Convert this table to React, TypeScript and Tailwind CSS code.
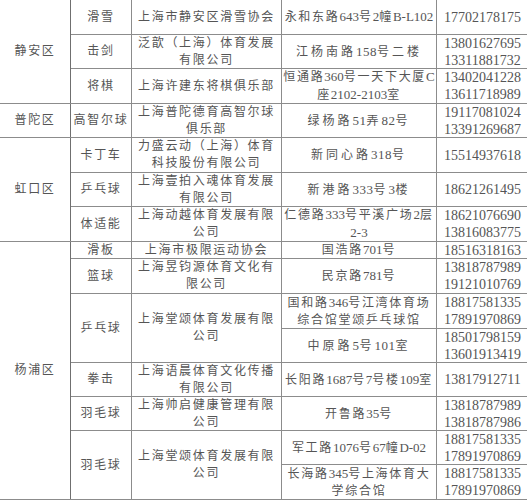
import type { ReactNode } from 'react';

type Row = {
  district?: { name: string; span: number };
  sport?: { name: string; span: number };
  company?: { lines: string[]; span: number };
  address: string[];
  wide?: boolean;
  phones: string[];
  h: string;
};

const rows: Row[] = [
  {
    district: { name: '静安区', span: 3 },
    sport: { name: '滑雪', span: 1 },
    company: { lines: ['上海市静安区滑雪协会'], span: 1 },
    address: ['永和东路643号2幢B-L102'],
    phones: ['17702178175'],
    h: 'h-[35px]',
  },
  {
    sport: { name: '击剑', span: 1 },
    company: { lines: ['泛歆（上海）体育发展', '有限公司'], span: 1 },
    address: ['江杨南路158号二楼'],
    wide: true,
    phones: ['13801627695', '13311881732'],
    h: 'h-[34px]',
  },
  {
    sport: { name: '将棋', span: 1 },
    company: { lines: ['上海许建东将棋俱乐部'], span: 1 },
    address: ['恒通路360号一天下大厦C', '座2102-2103室'],
    phones: ['13402041228', '13611718989'],
    h: 'h-[35px]',
  },
  {
    district: { name: '普陀区', span: 1 },
    sport: { name: '高智尔球', span: 1 },
    company: { lines: ['上海普陀德育高智尔球', '俱乐部'], span: 1 },
    address: ['绿杨路51弄82号'],
    wide: true,
    phones: ['19117081024', '13391269687'],
    h: 'h-[34px]',
  },
  {
    district: { name: '虹口区', span: 3 },
    sport: { name: '卡丁车', span: 1 },
    company: { lines: ['力盛云动（上海）体育', '科技股份有限公司'], span: 1 },
    address: ['新同心路318号'],
    wide: true,
    phones: ['15514937618'],
    h: 'h-[35px]',
  },
  {
    sport: { name: '乒乓球', span: 1 },
    company: { lines: ['上海壹拍入魂体育发展', '有限公司'], span: 1 },
    address: ['新港路333号3楼'],
    wide: true,
    phones: ['18621261495'],
    h: 'h-[34px]',
  },
  {
    sport: { name: '体适能', span: 1 },
    company: { lines: ['上海动越体育发展有限', '公司'], span: 1 },
    address: ['仁德路333号平溪广场2层', '2-3'],
    phones: ['18621076690', '13816083775'],
    h: 'h-[34px]',
  },
  {
    district: { name: '杨浦区', span: 9 },
    sport: { name: '滑板', span: 1 },
    company: { lines: ['上海市极限运动协会'], span: 1 },
    address: ['国浩路701号'],
    phones: ['18516318163'],
    h: 'h-[17px]',
  },
  {
    sport: { name: '篮球', span: 1 },
    company: { lines: ['上海昱钧源体育文化有', '限公司'], span: 1 },
    address: ['民京路781号'],
    phones: ['13818787989', '19121010769'],
    h: 'h-[35px]',
  },
  {
    sport: { name: '乒乓球', span: 2 },
    company: { lines: ['上海堂颂体育发展有限', '公司'], span: 2 },
    address: ['国和路346号江湾体育场', '综合馆堂颂乒乓球馆'],
    phones: ['18817581335', '17891970869'],
    h: 'h-[35px]',
  },
  {
    address: ['中原路5号101室'],
    wide: true,
    phones: ['18501798159', '13601913419'],
    h: 'h-[34px]',
  },
  {
    sport: { name: '拳击', span: 1 },
    company: { lines: ['上海语晨体育文化传播', '有限公司'], span: 1 },
    address: ['长阳路1687号7号楼109室'],
    phones: ['13817912711'],
    h: 'h-[34px]',
  },
  {
    sport: { name: '羽毛球', span: 1 },
    company: { lines: ['上海帅启健康管理有限', '公司'], span: 1 },
    address: ['开鲁路35号'],
    phones: ['13818787989', '13818787986'],
    h: 'h-[34px]',
  },
  {
    sport: { name: '羽毛球', span: 2 },
    company: { lines: ['上海堂颂体育发展有限', '公司'], span: 2 },
    address: ['军工路1076号67幢D-02'],
    phones: ['18817581335', '17891970869'],
    h: 'h-[34px]',
  },
  {
    address: ['长海路345号上海体育大', '学综合馆'],
    phones: ['18817581335', '17891970869'],
    h: 'h-[35px]',
  },
];

const CJK = /[\u3000-\u30ff\u4e00-\u9fff\uff00-\uffef]/;

// CJK runs get the wide letter spacing of the source doc, digits stay tight
function mixed(text: string, wide = false): ReactNode[] {
  return text
    .split(/([\u3000-\u30ff\u4e00-\u9fff\uff00-\uffef]+)/)
    .filter(Boolean)
    .map((part, i) =>
      CJK.test(part) ? (
        <span key={i} className={wide ? 'tracking-[3px]' : 'tracking-[1.7px]'}>
          {part}
        </span>
      ) : (
        <span key={i} className={wide ? 'text-[13px] tracking-[0.5px]' : 'text-[13px]'}>
          {part}
        </span>
      )
    );
}

const cell =
  'border border-[#8c8c8c] p-0 text-center align-middle leading-[17px] whitespace-nowrap';

// lines are 17px apart like the source, the pair bleeds 1px into the borders
function Lines({ lines, wide, className = '' }: { lines: string[]; wide?: boolean; className?: string }) {
  return (
    <div className={`-my-px ${className}`}>
      {lines.map((l, j) => (
        <div key={j}>{className ? l : mixed(l, wide)}</div>
      ))}
    </div>
  );
}

export default function App() {
  return (
    <div className="w-[527px] h-[500px] overflow-hidden bg-white">
      <table className="-ml-px -mt-px table-fixed border-collapse w-[529px] font-['Liberation_Serif','Noto_Sans_CJK_SC',serif] text-[12px] text-[#555555]">
        <colgroup>
          <col className="w-[71px]" />
          <col className="w-[61px]" />
          <col className="w-[150px]" />
          <col className="w-[155px]" />
          <col className="w-[92px]" />
        </colgroup>
        <tbody>
          {rows.map((r, i) => (
            <tr key={i} className={r.h}>
              {r.district && (
                <td rowSpan={r.district.span} className={`${cell} border-r-[#6f6f6f]`}>
                  {mixed(r.district.name)}
                </td>
              )}
              {r.sport && (
                <td rowSpan={r.sport.span} className={cell}>
                  <Lines lines={[r.sport.name]} />
                </td>
              )}
              {r.company && (
                <td rowSpan={r.company.span} className={cell}>
                  <Lines lines={r.company.lines} />
                </td>
              )}
              <td className={cell}>
                <Lines lines={r.address} wide={r.wide} />
              </td>
              <td className={cell}>
                <Lines lines={r.phones} className="text-[14px]" />
              </td>
            </tr>
          ))}
        </tbody>
      </table>
    </div>
  );
}
